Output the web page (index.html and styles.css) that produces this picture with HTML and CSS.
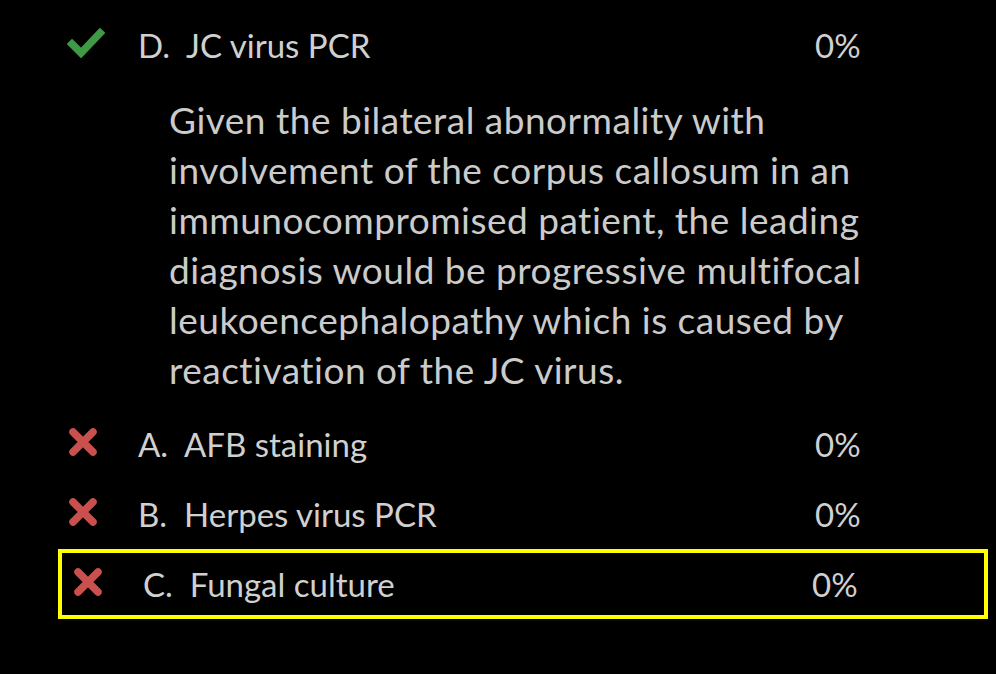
FILE: index.html
```html
<!DOCTYPE html>
<html>
<head>
<meta charset="utf-8">
<link rel="stylesheet" href="styles.css">
</head>
<body>
<div class="list">
  <div class="row">
    <span class="icon">
      <svg width="38" height="30" viewBox="0 0 38 30"><path d="M5 16 L14 25 L33 5" fill="none" stroke="#3f9a45" stroke-width="7.5" stroke-linecap="square" stroke-linejoin="miter"/></svg>
    </span>
    <span class="label">D.&nbsp;&nbsp;JC virus PCR</span>
    <span class="pct">0%</span>
  </div>
  <p class="explain">Given the bilateral abnormality with involvement of the corpus callosum in an immunocompromised patient, the leading diagnosis would be progressive multifocal leukoencephalopathy which is caused by reactivation of the JC virus.</p>
  <div class="row">
    <span class="icon"><svg width="32" height="32" viewBox="0 0 32 32"><path d="M6 6 L26 26 M26 6 L6 26" stroke="#c9504c" stroke-width="7.5" stroke-linecap="round"/></svg></span>
    <span class="label">A.&nbsp;&nbsp;AFB staining</span>
    <span class="pct">0%</span>
  </div>
  <div class="row">
    <span class="icon"><svg width="32" height="32" viewBox="0 0 32 32"><path d="M6 6 L26 26 M26 6 L6 26" stroke="#c9504c" stroke-width="7.5" stroke-linecap="round"/></svg></span>
    <span class="label">B.&nbsp;&nbsp;Herpes virus PCR</span>
    <span class="pct">0%</span>
  </div>
  <div class="row selected">
    <span class="icon"><svg width="32" height="32" viewBox="0 0 32 32"><path d="M6 6 L26 26 M26 6 L6 26" stroke="#c9504c" stroke-width="7.5" stroke-linecap="round"/></svg></span>
    <span class="label">C.&nbsp;&nbsp;Fungal culture</span>
    <span class="pct">0%</span>
  </div>
</div>
</body>
</html>
```
FILE: styles.css
```css
html, body {
  margin: 0;
  padding: 0;
  background: #000;
}
body {
  width: 996px;
  height: 674px;
  overflow: hidden;
  font-family: Lato, "Noto Sans", sans-serif;
  color: #d0d0d0;
}
.list {
  padding-top: 10px;
  margin-left: 58px;
  width: 930px;
}
.row {
  box-sizing: border-box;
  height: 70px;
  display: flex;
  align-items: center;
  border: 4px solid transparent;
  padding-left: 5px;
  font-size: 33px;
}
.row.selected {
  border-color: #ffff00;
  padding-left: 10px;
}
.icon {
  width: 71px;
  display: flex;
  align-items: center;
  margin-top: -4px;
}
.label {
  flex: 1;
}
.pct {
  width: 169px;
}
.row.selected .pct {
  width: 172px;
}
.explain {
  margin: 15px 99px 14px 111px;
  font-size: 37px;
  letter-spacing: 0.5px;
  line-height: 50px;
  color: #cbcbcb;
}
```
